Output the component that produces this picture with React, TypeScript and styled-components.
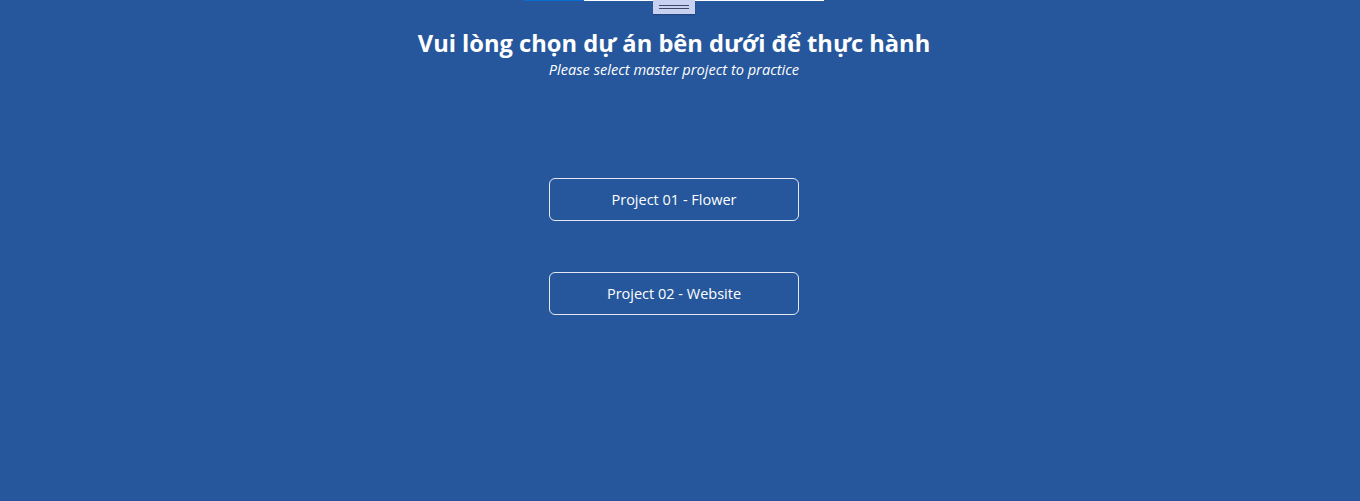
import React from 'react'
import styled, { createGlobalStyle } from 'styled-components';

const GlobalStyle = createGlobalStyle`
    html, body {
        margin: 0;
        padding: 0;
        background-color: #26579c;
        font-family: "Segoe UI", "Open Sans", "Noto Sans", sans-serif;
    }
`

const Page = styled.div`
    height: 501px;
    padding-right: 12px;
    background-color: #26579c;
    display: flex;
    flex-direction: column;
    align-items: center;
    color: #fff;
`

const TopBar = styled.div`
    width: 300px;
    height: 1px;
    display: flex;
`

const BarSegment = styled.div<{grow: number, color: string}>`
    flex: ${p => p.grow};
    background-color: ${p => p.color};
`

const Handle = styled.div`
    width: 42px;
    height: 14px;
    background-color: #c9d1f0;
    display: flex;
    flex-direction: column;
    align-items: center;
    justify-content: center;
    gap: 2px;
    box-shadow: 0 1px 1px rgba(0, 0, 0, 0.2);
    margin-top: -1px;
`

const HandleLine = styled.div`
    width: 30px;
    height: 1px;
    background-color: #3f4868;
`

const Title = styled.h1`
    margin: 14px 0 0;
    font-size: 23.7px;
    font-weight: 700;
    line-height: 30px;
`

const Subtitle = styled.p`
    margin: 1px 0 0;
    font-size: 14.6px;
    font-style: italic;
    line-height: 20px;
`

const ProjectList = styled.div`
    margin-top: 99px;
    display: flex;
    flex-direction: column;
    gap: 51px;
`

const ProjectButton = styled.button`
    width: 250px;
    height: 43px;
    background: transparent;
    border: 1px solid #e3e8f2;
    border-radius: 6px;
    color: #fff;
    font-family: inherit;
    font-size: 14.5px;
    cursor: pointer;
`

const projects = ['Project 01 - Flower', 'Project 02 - Website']

function App() {
  return (
    <>
      <GlobalStyle />
      <Page>
        <TopBar>
          <BarSegment grow={60} color="#0a6ed1" />
          <BarSegment grow={240} color="#ffffff" />
        </TopBar>
        <Handle>
          <HandleLine />
          <HandleLine />
        </Handle>
        <Title>Vui lòng chọn dự án bên dưới để thực hành</Title>
        <Subtitle>Please select master project to practice</Subtitle>
        <ProjectList>
          {projects.map(name => (
            <ProjectButton key={name}>{name}</ProjectButton>
          ))}
        </ProjectList>
      </Page>
    </>
  )
}

export default App
